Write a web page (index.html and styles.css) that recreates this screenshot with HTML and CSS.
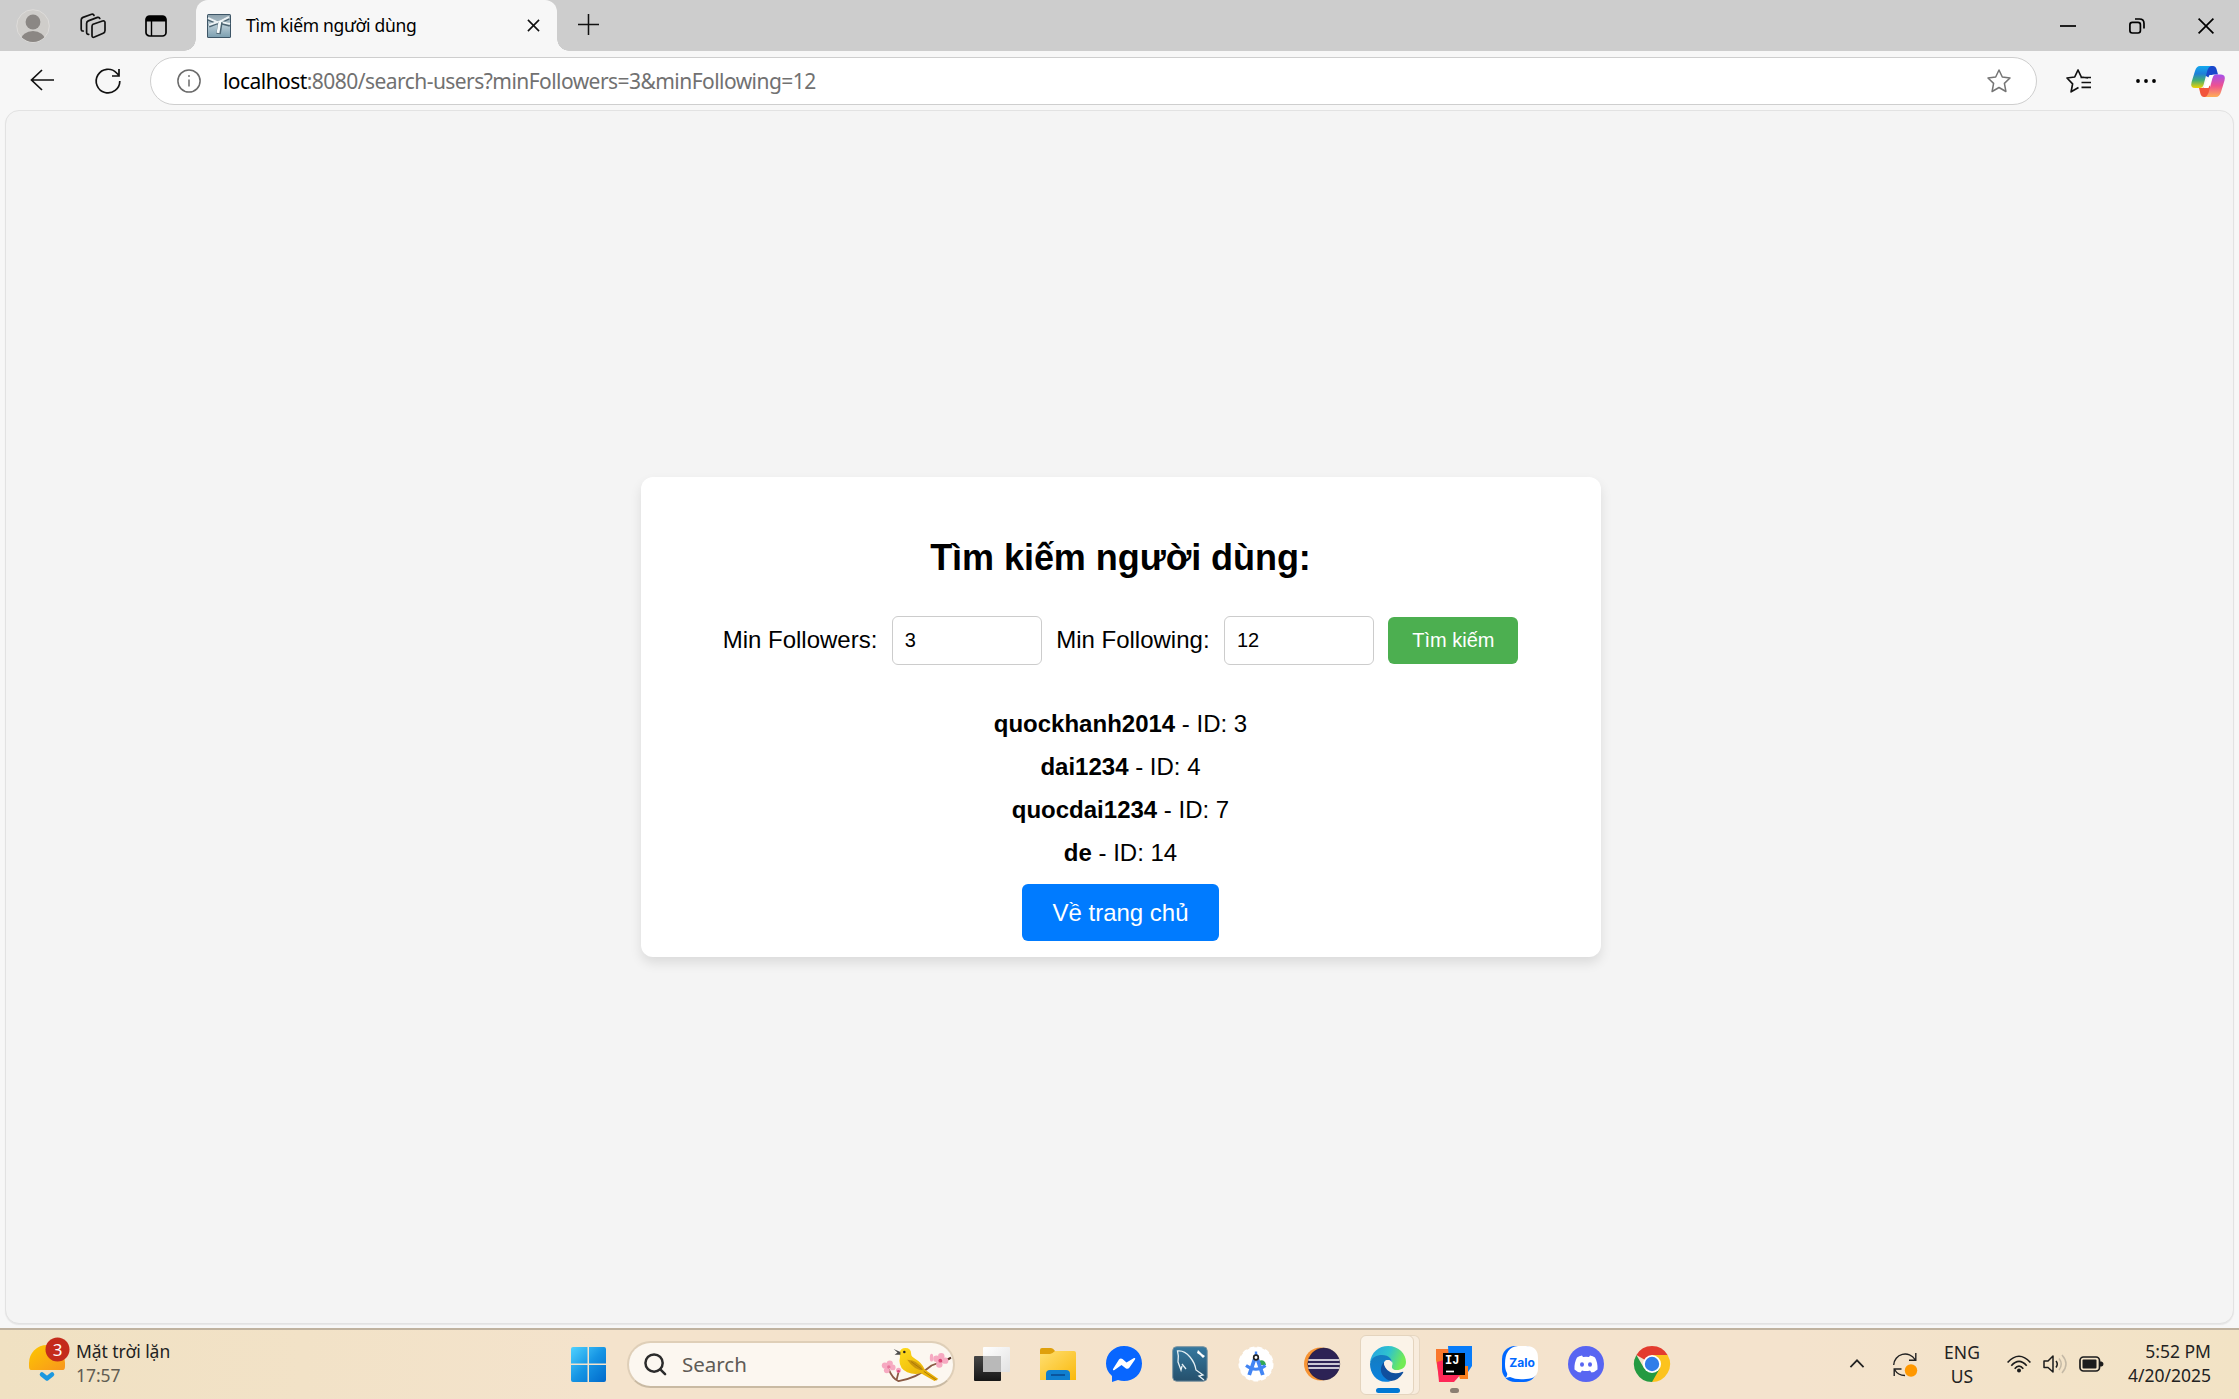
FILE: index.html
```html
<!DOCTYPE html>
<html lang="vi">
<head>
<meta charset="utf-8">
<title>Tìm kiếm người dùng</title>
<link rel="stylesheet" href="styles.css">
</head>
<body>
<div class="screen">
  <header class="tabstrip">
    <svg class="avatar" viewBox="0 0 34 34"><defs><clipPath id="av"><circle cx="17" cy="17" r="16"/></clipPath></defs><circle cx="17" cy="17" r="16.3" fill="#cfcdca" stroke="#dedcda"/><g clip-path="url(#av)" fill="#8b8784"><ellipse cx="17" cy="13" rx="7.4" ry="7.6"/><ellipse cx="17" cy="31" rx="12" ry="9"/></g></svg>
    <svg class="workspaces" viewBox="0 0 26 26" fill="none" stroke="#111" stroke-width="1.7" stroke-linejoin="round" stroke-linecap="round"><path d="M13 11.2 L22.5 8 Q25 7.4 25 9.6 V17.5 Q25 19.5 23.2 20.2 L14.5 24 Q12 25 12 22.5 V13.5 Q12 11.7 13 11.2Z"/><path d="M8.7 21.3 Q6.6 21.6 6.6 19.3 V10.5 Q6.6 8.6 8.3 7.9 L17.5 4.4 Q19.3 3.9 19.8 5.5"/><path d="M3.3 18 Q1.2 18.2 1.2 16 V7 Q1.2 5.2 3 4.4 L11.6 1.3 Q13.4 .8 14 2.4"/></svg>
    <svg class="vtabs" viewBox="0 0 22 22"><rect x="1" y="1" width="20" height="20" rx="3.6" fill="none" stroke="#000" stroke-width="1.7"/><path d="M1 6.5V4Q1 1 4 1H18Q21 1 21 4V6.5Z"/><path d="M6.5 6V21" stroke="#000" stroke-width="1.4"/></svg>
    <div class="tab">
      <svg class="favicon" viewBox="0 0 24 24"><defs><linearGradient id="fv" x2="0" y2="1"><stop stop-color="#8fa3ae"/><stop offset=".5" stop-color="#b4c8d2"/><stop offset="1" stop-color="#7da0b1"/></linearGradient></defs><rect width="24" height="24" rx="1.500" fill="#3d5566"/><rect x="1" y="1" width="22" height="22" fill="url(#fv)"/><path d="M1 5L11 9L22 4M2 12L12 8L23 11" stroke="#4b6371" stroke-width="3.400" fill="none"/><path d="M1 4L11 8.500L22 3M2 11L12 7.500L23 10" stroke="#edf3f5" stroke-width="2" fill="none"/><path d="M13.500 8L11.500 20" stroke="#4b6371" stroke-width="4.500"/><path d="M13 7L11 19" stroke="#f7fbfc" stroke-width="2.800"/></svg>
      <span class="tab-title">Tìm kiếm người dùng</span>
      <svg class="tab-close" viewBox="0 0 14 14" stroke="#111" stroke-width="1.7"><path d="M1 1L13 13M13 1L1 13"/></svg>
    </div>
    <svg class="newtab" viewBox="0 0 22 22" stroke="#111" stroke-width="1.6"><path d="M11 0V22M0 11H22"/></svg>
    <div class="window-controls">
      <svg viewBox="0 0 16 16" stroke="#000" stroke-width="1.7"><path d="M0 8H16"/></svg>
      <svg viewBox="0 0 16 16" fill="none" stroke="#000" stroke-width="1.7"><rect x=".9" y="4.4" width="10.5" height="10.6" rx="2.4"/><path d="M6 1H10.5Q15 1 15 5.5V10.5"/></svg>
      <svg viewBox="0 0 16 16" stroke="#000" stroke-width="1.7"><path d="M.6 .6L15.4 15.4M15.4 .6L.6 15.4"/></svg>
    </div>
  </header>

  <nav class="toolbar">
    <svg class="back" viewBox="0 0 24 22" fill="none" stroke="#111" stroke-width="1.7"><path d="M12 1L1.5 11L12 21M1.5 11H24"/></svg>
    <svg class="reload" viewBox="0 0 26 26" fill="none" stroke="#111" stroke-width="1.7"><path d="M24.8 13A11.8 11.8 0 1 1 21.6 5L24 7.5M24 1V8H17"/></svg>
    <div class="address">
      <svg class="info" viewBox="0 0 24 24" fill="none" stroke="#6b6b6b" stroke-width="1.5"><circle cx="12" cy="12" r="11.1"/><path d="M12 10.5V17.5"/><circle cx="12" cy="7" r=".6" fill="#6b6b6b" stroke-width=".8"/></svg>
      <span class="url"><b>localhost</b>:8080/search-users?minFollowers=3&amp;minFollowing=12</span>
      <svg class="star" viewBox="0 0 24 24" fill="none" stroke="#757575" stroke-width="1.5" stroke-linejoin="round"><path d="M12 1L15.3 8L23 9L17.4 14.4L18.9 22.5L12 18.5L5.1 22.5L6.6 14.4L1 9L8.7 8Z"/></svg>
    </div>
    <svg class="favorites" viewBox="0 0 25 24" fill="none" stroke="#111" stroke-width="1.7" stroke-linejoin="round"><path d="M22 9L15.3 8L12 1L8.7 8L1 9L6.6 14.8L5.1 22.8L12.5 18.5M14.5 8.5H25M15.5 13.5H25M15.5 18.3H25"/></svg>
    <svg class="more" viewBox="0 0 20 6"><circle cx="2" cy="3" r="1.9"/><circle cx="10" cy="3" r="1.9"/><circle cx="18" cy="3" r="1.9"/></svg>
    <svg class="copilot" viewBox="0 0 34 31"><defs><linearGradient id="c1" x2="0" y2="1"><stop stop-color="#12a9ef"/><stop offset=".35" stop-color="#1f7fd8"/><stop offset=".65" stop-color="#43ae74"/><stop offset="1" stop-color="#f3d300"/></linearGradient><linearGradient id="c2" x2="0" y2="1"><stop stop-color="#a650ec"/><stop offset=".5" stop-color="#ee5290"/><stop offset="1" stop-color="#ffae55"/></linearGradient></defs><path d="M15 0H22Q24.500 0 25.500 3L27 8.500H23Q19.500 8.500 18.500 12L15 10Z" fill="#1948cc"/><path d="M19 31H13Q10.500 31 9.500 28L8 22H11Q14 22 15 18L19 20Z" fill="#f2553c"/><path d="M9 0H20Q17.500 1 16.500 4L12.500 19Q11.500 22 9 22H4Q-1 22 .6 16L4 5Q5.500 0 9 0Z" fill="url(#c1)"/><path d="M25 31H14Q16.500 30 17.500 27L21.500 12Q22.500 8.500 25 8.500H30Q35 8.500 33.500 14.500L30 26Q28.500 31 25 31Z" fill="url(#c2)"/><path d="M18.500 9H22.200L17.500 22H12.500Z" fill="#fff"/></svg>
  </nav>

  <main class="viewport">
    <section class="container">
      <h2>Tìm kiếm người dùng:</h2>
      <form class="search-form">
        <label for="followers">Min Followers:</label>
        <input id="followers" type="text" value="3">
        <label for="following">Min Following:</label>
        <input id="following" type="text" value="12">
        <button type="button">Tìm kiếm</button>
      </form>
      <ul class="users">
        <li><strong>quockhanh2014</strong> - ID: 3</li>
        <li><strong>dai1234</strong> - ID: 4</li>
        <li><strong>quocdai1234</strong> - ID: 7</li>
        <li><strong>de</strong> - ID: 14</li>
      </ul>
      <a class="home">Về trang chủ</a>
    </section>
  </main>

  <footer class="taskbar">
    <div class="weather">
      <svg viewBox="0 0 42 46"><defs><linearGradient id="sun" x2="1" y2="1"><stop stop-color="#fdc800"/><stop offset="1" stop-color="#f8961d"/></linearGradient></defs><path d="M3 33Q1 33 1 29V26A18 18 0 0 1 37 26V29Q37 33 35 33Z" fill="url(#sun)"/><path d="M14 37.500L19 41.500L24 37.500" fill="none" stroke="#1b98e0" stroke-width="4.500" stroke-linecap="round" stroke-linejoin="round"/><circle cx="29.500" cy="12.500" r="12" fill="#c42b1c"/><text x="29.500" y="18.500" text-anchor="middle" class="badge-num">3</text></svg>
      <div class="weather-text"><span>Mặt trời lặn</span><span class="muted">17:57</span></div>
    </div>
    <svg class="start" viewBox="0 0 35 35"><defs><linearGradient id="w" x2="1" y2="1"><stop stop-color="#4fd2ff"/><stop offset=".5" stop-color="#1695e4"/><stop offset="1" stop-color="#0069cb"/></linearGradient></defs><path d="M2 0H16.500V16.500H0V2Q0 0 2 0ZM18 0H33Q35 0 35 2V16.500H18ZM0 18H16.500V35H2Q0 35 0 33ZM18 18H35V33Q35 35 33 35H18Z" fill="url(#w)"/></svg>
    <div class="search">
      <svg class="lens" viewBox="0 0 24 24" fill="none" stroke="#2b2b2b" stroke-width="2.6" stroke-linecap="round"><circle cx="10.500" cy="10.500" r="9"/><path d="M17 17L22 22"/></svg>
      <span>Search</span>
      <svg class="bird" viewBox="0 0 72 38"><defs><linearGradient id="bd" x2="1" y2="1"><stop stop-color="#ffdc1c"/><stop offset="1" stop-color="#e3a400"/></linearGradient></defs><path d="M8 23Q12 33 18 35Q37 32 52 19L71 12M16 34L18 26" fill="none" stroke="#8a5a44" stroke-width="1.800"/><path d="M68 13L72 11" stroke="#4b2b1d" stroke-width="2"/><path d="M19 6Q20 1 25 1Q31 1 31 7Q31 10 35 12Q42 16 45 23L59 33L55 35L41 27Q34 29 27 26Q19 22 19 14Q20 10 19 6Z" fill="url(#bd)"/><path d="M27 13Q38 13 44 24Q34 24 27 13Z" fill="#cb950c"/><path d="M44 25L57 34M31 15L42 23" stroke="#a97a08"/><path d="M20 5L13 2L17 5.500L14 8L20 8Z" fill="#4c4c4c"/><circle cx="24" cy="5" r="1.300" fill="#222"/><g fill="#f6a9c1"><circle cx="4" cy="19" r="3.200"/><circle cx="9" cy="17" r="3.200"/><circle cx="12" cy="21" r="3"/><circle cx="6" cy="24" r="3"/><circle cx="18" cy="24" r="2.600"/><circle cx="57" cy="12" r="3.300"/><circle cx="62" cy="9.500" r="3.300"/><circle cx="66" cy="14" r="3.300"/><circle cx="60" cy="18" r="3.300"/><ellipse cx="52" cy="11" rx="1.800" ry="4"/></g><circle cx="8" cy="20.500" r="1.800" fill="#e8759b"/><circle cx="61" cy="14" r="2" fill="#dc4776"/><circle cx="18" cy="25" r="1.500" fill="#d94d7c"/></svg>
    </div>
    <div class="apps">
      <div class="app"><svg viewBox="0 0 36 36"><defs><linearGradient id="tv" x2="0" y2="1"><stop stop-color="#464646"/><stop offset="1" stop-color="#161616"/></linearGradient><linearGradient id="tw" x2="1" y2="1"><stop stop-color="#fff"/><stop offset="1" stop-color="#e2e2e2"/></linearGradient></defs><rect y="10" width="27" height="25" rx="1" fill="url(#tv)"/><rect x="9" y="1" width="27" height="25" rx="1" fill="url(#tw)"/><path d="M9 10H27V26H9Z" fill="#b9b9b9"/></svg></div>
      <div class="app"><svg viewBox="0 0 36 36"><defs><linearGradient id="fo" x2="1" y2="1"><stop stop-color="#ffdf72"/><stop offset="1" stop-color="#f9b90c"/></linearGradient></defs><path d="M0 4Q0 2 2 2H11Q13 2 15 5H20V10H0Z" fill="#dfa00c"/><path d="M0 8H10Q12 8 15 5H34Q36 5 36 7V34H0Z" fill="url(#fo)"/><path d="M6 34V28Q6 24 10 24H26Q30 24 30 28V34Z" fill="#0f7fd0"/><path d="M11 29H25" stroke="#0a559d" stroke-width="2"/></svg></div>
      <div class="app"><svg viewBox="0 0 36 36"><path d="M18 0C8 0 0 7.500 0 17.500Q0 25 6 30V36L12 34Q15 35 18 35C28 35 36 28 36 17.500S28 0 18 0Z" fill="#0866ff"/><path d="M7 23L13 13.500Q14.500 12 16.500 13L20.500 16.500L28 12Q30 11.500 29 13.500L23.500 21.500Q22 23.500 20 22.500L15.500 19L8.500 24Q6.500 25 7 23Z" fill="#fff"/></svg></div>
      <div class="app"><svg viewBox="0 0 36 36"><defs><linearGradient id="my" x2="0" y2="1"><stop stop-color="#35789f"/><stop offset="1" stop-color="#25506c"/></linearGradient></defs><rect x=".7" y=".7" width="34.500" height="34.500" rx="4" fill="url(#my)" stroke="#7993a0"/><path d="M10 20L9 24L6 16Q7 10 5.500 5Q12 4 18 11Q23 17 24 24L31 29L27 30L32 34M10 18L14 23" fill="none" stroke="#e6f0f4" stroke-width="1.300"/><path d="M26 4L30 8L33 10L31 12L28 9L25 7Z" fill="#fff"/></svg></div>
      <div class="app"><svg viewBox="0 0 36 36"><circle cx="18" cy="18" r="16.800" fill="#fff" stroke="#fff" stroke-width="1.500" stroke-dasharray="5 3"/><path d="M22 14.500Q27 13.500 28 19H22Z" fill="#32a852"/><path d="M16.800 5.500H19.200V10H16.800Z" fill="#4285f4"/><path d="M18 9L11.200 29M18 9L24.800 29" fill="none" stroke="#4285f4" stroke-width="3.800"/><path d="M8 19.500Q18 27 27.500 19.500" fill="none" stroke="#4285f4" stroke-width="3"/><circle cx="18" cy="11.500" r="2.300" fill="#fff" stroke="#222" stroke-width="1.700"/></svg></div>
      <div class="app"><svg viewBox="0 0 36 36"><circle cx="16.500" cy="18" r="16.500" fill="#f79434"/><circle cx="19.800" cy="18" r="16" fill="#2c2255" stroke="#1c1638" stroke-width=".5"/><path d="M4.300 14H35.400M4 18H35.800M4.300 22H35.400" stroke="#fff" stroke-width="1.700"/></svg></div>
      <div class="app active"><svg viewBox="0 0 36 36"><defs><linearGradient id="e1" x2="1" y2=".3"><stop stop-color="#249fe4"/><stop offset=".55" stop-color="#2fc3ce"/><stop offset="1" stop-color="#71eb55"/></linearGradient><linearGradient id="e2" x2="0" y2="1"><stop stop-color="#157cc0"/><stop offset="1" stop-color="#0a82df"/></linearGradient></defs><path d="M0 17C1 6 9 0 18 0C29 0 36 8 36 16C36 22 31 24 27 24C22 24 21 22 22 20C24 15 20 12 15 11Q5 9 0 17Z" fill="url(#e1)"/><path d="M0 18C1 11 7 9 12 9C19 9 23 14 22 18Q21 14 17 14C13 14 8 28 21 35C8 39 0 28 0 18Z" fill="url(#e2)"/><path d="M14 16C7 24 13 33 21 35Q29 34 33 27Q34 25 32 26C22 30 14 24 14 16Z" fill="#104f9e"/><path d="M14 18Q15 13.500 19 14Q23 15 22 19Q21 22 24 24Q16 25 14 18Z" fill="#fbf3e8"/></svg><i class="run"></i></div>
      <div class="app"><svg viewBox="0 0 36 36"><path d="M0 3H13V20L4 36L0 14Z" fill="#f9772c"/><path d="M12 0H36V20L30 29H14Z" fill="#087cfa"/><path d="M24 33H32V20H20Z" fill="#fc801d"/><path d="M1 16L14 12L26 27L18 36H3Z" fill="#fe2857"/><rect x="7" y="7" width="22" height="22"/><text x="9" y="18" class="ij">IJ</text><path d="M10 25.500H18" stroke="#fff" stroke-width="1.700"/></svg><i class="dot"></i></div>
      <div class="app"><svg viewBox="0 0 36 36"><rect width="35" height="36" rx="13" fill="#0068ff"/><path d="M16 0H24Q36 0 36 12V22Q36 33 24 33Q14 34 8 31L3 32Q6 30 5 27Q3 24 3 18Q3 1 16 0Z" fill="#fff"/><text x="20" y="21" text-anchor="middle" class="zalo">Zalo</text></svg></div>
      <div class="app"><svg viewBox="0 0 36 36"><circle cx="18" cy="18" r="18" fill="#5865f2"/><path d="M14 9.500L15 11Q18 10.500 21 11L22 9.500Q25 10 27 11.500Q30 17 29.500 23.500Q27 26 23.500 26.500L22 24.500Q18 25.500 14 24.500L12.500 26.500Q9 26 6.500 23.500Q6 17 9 11.500Q11 10 14 9.500Z" fill="#fff"/><ellipse cx="14" cy="18.500" rx="2" ry="2.300" fill="#5865f2"/><ellipse cx="22" cy="18.500" rx="2" ry="2.300" fill="#5865f2"/></svg></div>
      <div class="app"><svg viewBox="0 0 36 36"><path d="M18 18L2.400 9A18 18 0 0 1 33.600 9Z" fill="#e33b2e"/><path d="M18 18L18 9H33.600A18 18 0 0 1 18 36Z" fill="#fcc31e"/><path d="M2.400 9A18 18 0 0 0 18 36L25.800 22.500L10.200 22.500Z" fill="#249a41"/><circle cx="18" cy="18" r="9" fill="#fff"/><circle cx="18" cy="18" r="7.200" fill="#2f7de9"/></svg></div>
    </div>
    <div class="tray">
      <svg class="chev" viewBox="0 0 16 10" fill="none" stroke="#222" stroke-width="1.900"><path d="M.7 9L8 1.500L15.300 9"/></svg>
      <svg class="sync" viewBox="0 0 24 25" fill="none" stroke="#222" stroke-width="1.400"><path d="M.7 13A11.500 11.500 0 0 1 22 7.500M22.800 1V8.200H16M8.500 17H1.200V24M1.500 17.500Q5 23.500 12 23.500"/><circle cx="18" cy="18.500" r="6.200" fill="#ff9800" stroke="none"/></svg>
      <div class="lang"><span>ENG</span><span>US</span></div>
      <svg class="wifi" viewBox="0 0 24 18" fill="none" stroke="#1c1c1c" stroke-width="1.700"><path d="M.6 7.500Q12 -5 23.400 7.500M4.300 10.700Q12 2 19.700 10.700M7.700 13.700Q12 8.500 16.300 13.700"/><circle cx="12" cy="15.500" r="2" fill="#1c1c1c" stroke="none"/></svg>
      <svg class="sound" viewBox="0 0 25 20" fill="none" stroke="#1c1c1c" stroke-width="1.500" stroke-linejoin="round"><path d="M1 7H5L10 2V18L5 13.500H1Z"/><path d="M13 7Q15.500 10 13 13.500"/><path d="M16 4.500Q20.500 10 16 16M19 1Q27 10 19 19" stroke="#c4b9a6"/></svg>
      <svg class="battery" viewBox="0 0 25 16"><rect x="1" y="1" width="19.500" height="14" rx="3.500" fill="none" stroke="#1c1c1c" stroke-width="1.700"/><rect x="3.500" y="3.500" width="14" height="9" rx="1" fill="#1c1c1c"/><path d="M21 5.500H22.500Q24.500 6 24.500 8T22.500 10.500H21Z" fill="#1c1c1c"/></svg>
      <div class="clock"><span>5:52 PM</span><span>4/20/2025</span></div>
    </div>
  </footer>
</div>
</body>
</html>
```
FILE: styles.css
```css
* { box-sizing: border-box; }
body { margin: 0; font-family: "Noto Sans", sans-serif; color: #000; }
svg { display: block; flex: none; overflow: visible; }
.screen { width: 2239px; height: 1399px; display: flex; flex-direction: column; background: #f7f7f7; overflow: hidden; }

.tabstrip { height: 51px; flex: none; background: #cdcdcd; display: flex; align-items: center; padding-left: 16px; }
.avatar { width: 34px; height: 34px; margin-top: 1px; }
.workspaces { width: 26px; height: 26px; margin-left: 30px; }
.vtabs { width: 22px; height: 22px; margin-left: 39px; }
.tab { position: relative; width: 361px; height: 51px; margin-left: 29px; background: #f7f7f7; border-radius: 12px 12px 0 0; display: flex; align-items: center; padding-left: 11px; }
.tab::before, .tab::after { content: ""; position: absolute; bottom: 0; width: 12px; height: 12px; }
.tab::before { left: -12px; background: radial-gradient(circle at 0 0, #cdcdcd 11.5px, #f7f7f7 12px); }
.tab::after { right: -12px; background: radial-gradient(circle at 100% 0, #cdcdcd 11.5px, #f7f7f7 12px); }
.favicon { width: 24px; height: 24px; }
.tab-title { font-size: 17.5px; width: 170px; margin: -1px 0 0 15px; white-space: nowrap; letter-spacing: -.3px; }
.tab-close { width: 13px; height: 13px; margin-left: 111px; }
.newtab { width: 21px; height: 21px; margin-left: 21px; margin-top: -2px; }
.window-controls { display: flex; gap: 53px; margin-left: auto; padding-right: 25px; }
.window-controls svg { width: 16px; height: 16px; }

.toolbar { height: 59px; flex: none; display: flex; align-items: center; padding: 1px 0 0 30px; }
.back { width: 24px; height: 22px; margin-top: -2px; }
.reload { width: 26px; height: 26px; margin-left: 41px; }
.address { width: 1887px; height: 48px; margin-left: 29px; background: #fff; border: 1.5px solid #cecece; border-radius: 24px; display: flex; align-items: center; padding: 0 25px 0 26px; }
.info { width: 24px; height: 24px; }
.url { font-size: 21px; letter-spacing: -.55px; color: #717171; margin-left: 22px; white-space: nowrap; }
.url b { font-weight: 400; color: #000; }
.star { width: 24px; height: 24px; margin-left: auto; }
.favorites { width: 25px; height: 24px; margin-left: 29px; }
.more { width: 20px; height: 6px; margin-left: 45px; }
.copilot { width: 34px; height: 31px; margin-left: 35px; }

.viewport { height: 1214px; flex: none; margin: 0 5px 4px; background: #f4f4f4; border: 1px solid #e2e2e2; border-radius: 14px; display: flex; flex-direction: column; align-items: center; padding-top: 366px; box-shadow: 0 1px 1px #e6e6e6; font: 24px/28px "Liberation Sans", Arial, sans-serif; }
.container { width: 960px; height: 480px; margin-left: 3px; background: #fff; border-radius: 12px; box-shadow: 0 6px 12px rgba(0, 0, 0, .1); display: flex; flex-direction: column; align-items: center; padding: 60px 1px 0 0; }
h2 { margin: 0; font-size: 36px; line-height: 41px; letter-spacing: -.05px; }
.search-form { display: flex; align-items: center; gap: 14.4px; margin-top: 38px; white-space: nowrap; }
.search-form label { padding-bottom: 1px; }
.search-form input { width: 150px; height: 49px; border: 1px solid #ccc; border-radius: 6px; padding: 0 12px; font: 20px "Liberation Sans", Arial, sans-serif; }
.search-form button { width: 130px; height: 47px; border: 0; border-radius: 6px; background: #4caf50; color: #fff; padding: 0; font: 20px "Liberation Sans", Arial, sans-serif; }
.users { list-style: none; margin: 37px 0 0; padding: 0; text-align: center; line-height: 43px; }
.home { width: 197px; height: 57px; margin-top: 10px; background: #007bff; color: #fff; border-radius: 6px; text-align: center; line-height: 57px; }

.taskbar { height: 71px; flex: none; border-top: 2px solid #bfb29f; background: linear-gradient(90deg, #f0e1c2, #f4e3cc 27%, #f4e3cd 80%, #f2e3c5); display: flex; align-items: center; color: #222; font-size: 17.5px; line-height: 24px; white-space: nowrap; }
.weather { width: 571px; display: flex; align-items: center; padding-left: 28px; }
.weather svg { width: 42px; height: 46px; margin-top: -9px; }
.weather-text { display: flex; flex-direction: column; margin: -3px 0 0 6px; letter-spacing: -.05px; }
.muted { color: #625d52; }
.badge-num { font-size: 17px; fill: #fff; }
.start { width: 35px; height: 35px; }
.search { width: 328px; height: 47px; margin: -1px 0 0 21px; border: 2px solid #dfcfb8; border-bottom-color: #c9baa3; border-radius: 24px; background: #fcf7f0; display: flex; align-items: center; padding-left: 15px; font-size: 20.5px; color: #5f5b56; }
.lens { width: 23px; height: 23px; }
.search span { margin-left: 15px; width: 62px; }
.bird { width: 70px; height: 37px; margin-left: 137px; margin-top: 2px; }
.apps { display: flex; margin-left: 4px; }
.app { position: relative; width: 66px; height: 69px; display: grid; place-items: center; }
.app > svg { width: 36px; height: 36px; position: relative; margin-top: -2px; }
.active::before { content: ""; position: absolute; left: 5px; top: 5px; width: 52px; height: 58px; background: #fbf3e8; border: 1px solid #e4d4be; border-radius: 6px; box-shadow: 6px 0 0 -1px #f8ecdd, 6px 0 0 0 #e6d7c2; }
.run, .dot { position: absolute; bottom: 6px; height: 5px; border-radius: 3px; }
.run { width: 24px; left: 21px; background: #0078d4; }
.dot { width: 9px; left: 29px; background: #8b7f72; }
.ij { font: bold 12px "Liberation Mono", monospace; fill: #fff; }
.zalo { font: bold 12px Inter, sans-serif; fill: #0068ff; }
.tray { display: flex; align-items: center; margin-left: auto; padding-right: 28px; }
.chev { width: 16px; height: 9px; margin-top: -2px; }
.sync { width: 24px; height: 25px; margin-left: 28px; }
.lang { display: flex; flex-direction: column; align-items: center; width: 36px; margin: -1px 0 0 27px; }
.wifi { width: 24px; height: 18px; margin-left: 27px; margin-top: -2px; }
.sound { width: 25px; height: 20px; margin-left: 12px; margin-top: -2px; }
.battery { width: 25px; height: 16px; margin-left: 11px; margin-top: -2px; }
.clock { display: flex; flex-direction: column; align-items: flex-end; width: 84px; margin: -3px 0 0 23px; }
```
